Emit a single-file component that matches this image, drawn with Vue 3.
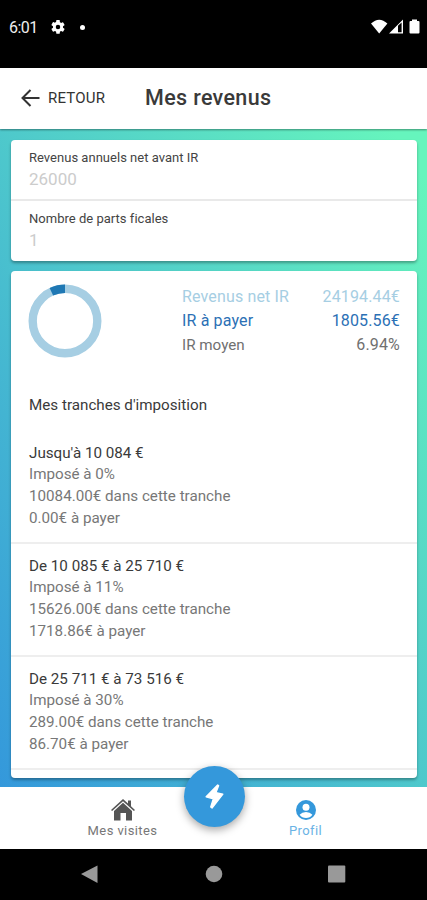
<script setup>
const fields = [
  { label: 'Revenus annuels net avant IR', value: '26000' },
  { label: 'Nombre de parts ficales', value: '1' },
]
const totals = [
  { label: 'Revenus net IR', value: '24194.44€', cls: 'light' },
  { label: 'IR à payer', value: '1805.56€', cls: 'strong' },
  { label: 'IR moyen', value: '6.94%', cls: 'plain' },
]
const brackets = [
  { title: "Jusqu'à 10 084 €", rate: 'Imposé à 0%', amount: '10084.00€ dans cette tranche', due: '0.00€ à payer' },
  { title: 'De 10 085 € à 25 710 €', rate: 'Imposé à 11%', amount: '15626.00€ dans cette tranche', due: '1718.86€ à payer' },
  { title: 'De 25 711 € à 73 516 €', rate: 'Imposé à 30%', amount: '289.00€ dans cette tranche', due: '86.70€ à payer' },
]
</script>

<template>
  <div class="screen">
    <div class="status">
      <span class="clock">6:01</span>
      <svg class="gear" viewBox="2 2 20 20"><path fill="#fff" fill-rule="evenodd" d="M19.14 12.94c.04-.3.06-.61.06-.94s-.02-.64-.07-.94l2.03-1.58a.49.49 0 0 0 .12-.61l-1.92-3.32a.49.49 0 0 0-.59-.22l-2.39.96a7 7 0 0 0-1.62-.94l-.36-2.54A.48.48 0 0 0 13.92 2h-3.84a.48.48 0 0 0-.47.41l-.36 2.54c-.59.24-1.13.57-1.62.94l-2.39-.96a.48.48 0 0 0-.59.22L2.74 8.87a.48.48 0 0 0 .12.61l2.03 1.58a7 7 0 0 0 0 1.88l-2.03 1.58a.49.49 0 0 0-.12.61l1.92 3.32c.12.22.37.29.59.22l2.39-.96c.5.38 1.03.7 1.62.94l.36 2.54c.05.24.24.41.48.41h3.84c.24 0 .44-.17.47-.41l.36-2.54a7 7 0 0 0 1.62-.94l2.39.96c.22.08.47 0 .59-.22l1.92-3.32a.48.48 0 0 0-.12-.61zM12 15.2a3.2 3.2 0 1 1 0-6.4 3.2 3.2 0 0 1 0 6.4z"/></svg>
      <span class="dot"></span>
      <svg class="signals" viewBox="0 0 50 16">
        <path fill="#fff" d="M0 4.500Q8.200-3.200 16.400 4.500L8.200 14.500Z"/>
        <path fill="#fff" fill-rule="evenodd" d="M18 14.500L32 .500V14.500ZM27 6.800V13.200H30.600V3.500Z"/>
        <path fill="#fff" d="M39.500 2h1.500V.500h5V2h1.500q1 0 1 1v10.500q0 1-1 1h-8q-1 0-1-1V3q0-1 1-1Z"/>
      </svg>
    </div>

    <header class="header">
      <svg class="arrow" viewBox="0 0 18 18"><path d="M18 9H1M9 1L1 9l8 8" fill="none" stroke="#333" stroke-width="2"/></svg>
      <span class="back">RETOUR</span>
      <h1>Mes revenus</h1>
    </header>

    <main class="content">
      <section class="card form">
        <div v-for="f in fields" :key="f.label" class="field">
          <div class="label">{{ f.label }}</div>
          <div class="value">{{ f.value }}</div>
        </div>
      </section>

      <section class="card results">
        <div class="summary">
          <svg class="ring" viewBox="0 0 74 74">
            <circle cx="37" cy="37" r="32.300" fill="none" stroke="#a6cee3" stroke-width="8.400"/>
            <circle cx="37" cy="37" r="32.300" fill="none" stroke="#1f78b4" stroke-width="8.400" pathLength="100" stroke-dasharray="6.94 93.06" stroke-dashoffset="-93.06" transform="rotate(-90 37 37)"/>
          </svg>
          <div class="totals">
            <div v-for="t in totals" :key="t.label" class="total" :class="t.cls">
              <span>{{ t.label }}</span><span>{{ t.value }}</span>
            </div>
          </div>
        </div>
        <h2>Mes tranches d'imposition</h2>
        <div v-for="b in brackets" :key="b.title" class="bracket">
          <h3>{{ b.title }}</h3>
          <p>{{ b.rate }}</p>
          <p>{{ b.amount }}</p>
          <p>{{ b.due }}</p>
        </div>
      </section>
    </main>

    <nav class="tabs">
      <div class="tab visits">
        <svg class="home" viewBox="0 0 24 22"><path fill="#555" d="M12 0l5 4.500V1.500h3v5.700l4 3.700-1.100 1.200L12 2.300 1.100 12.100 0 10.900Z"/><path fill="#555" d="M12 3.800l9 8.100V21.500h-6v-7.500H9.500v7.500H3v-9.600Z"/></svg>
        <span>Mes visites</span>
      </div>
      <div class="tab profile">
        <svg class="person" viewBox="0 0 20 20"><circle cx="10" cy="10" r="10" fill="#3498db"/><circle cx="10" cy="7.200" r="3.500" fill="#fff"/><path fill="#fff" d="M3.600 14.800Q6 12 10 12t6.400 2.800Q14 18 10 18T3.600 14.800Z"/></svg>
        <span>Profil</span>
      </div>
      <div class="fab">
        <svg class="bolt" viewBox="0 0 57 76"><path fill="#fff" stroke="#fff" stroke-width="4" stroke-linejoin="round" d="M38 3L3 39 25 45 17 70 21 73 54 31 33 26 41 5Z"/></svg>
      </div>
    </nav>

    <div class="system">
      <svg viewBox="0 0 427 51"><path fill="#999" d="M81 25L97.500 16.500V34Z"/><circle cx="214" cy="25" r="8.300" fill="#999"/><rect x="328" y="16.500" width="17.300" height="17" rx="1" fill="#999"/></svg>
    </div>
  </div>
</template>

<style>
body { margin: 0; overflow: hidden; }
</style>

<style scoped>
.screen { width: 427px; height: 900px; display: flex; flex-direction: column; overflow: hidden; font-family: Roboto, sans-serif; background: #000; }
.status { height: 68px; flex: none; box-sizing: border-box; padding: 19px 6px 0 9px; display: flex; align-items: flex-start; background: #000; color: #eee; }
.clock { width: 42px; font-size: 16px; line-height: 18px; letter-spacing: -0.5px; }
.gear { width: 14px; height: 14px; margin-top: 1px; }
.dot { width: 5px; height: 5px; border-radius: 50%; background: #fff; margin: 6px 0 0 15px; }
.signals { width: 50px; height: 16px; margin-left: auto; }
.header { height: 61px; flex: none; display: flex; align-items: center; padding: 0 0 2px 21px; box-sizing: border-box; background: #fff; position: relative; box-shadow: 0 1px 2px rgba(0,0,0,.4); color: #333; }
.arrow { width: 19px; height: 18px; }
.back { width: 97px; margin-left: 8px; font-size: 15px; letter-spacing: .2px; }
h1, h2, h3, p { margin: 0; font-weight: 400; }
h1 { font-size: 21.5px; font-weight: 500; letter-spacing: .35px; color: #3a3a3a; }
.content { height: 658px; flex: none; box-sizing: border-box; padding: 11px 10px 9px 11px; display: flex; flex-direction: column; gap: 10px; background: linear-gradient(57deg, #3498db, #66f5bd 96%); }
.card { background: #fff; border-radius: 4px; box-shadow: 0 2px 3px rgba(0,0,0,.32); overflow: hidden; }
.form { height: 121px; flex: none; }
.field { height: 59px; box-sizing: border-box; padding: 8px 18px 0; }
.field + .field { border-top: 2px solid #e9e9e9; height: 62px; }
.label { font-size: 13px; line-height: 19px; letter-spacing: .02px; color: #444; }
.value { font-size: 17px; line-height: 24px; color: #ccc; }
.results { flex: 1; min-height: 0; }
.summary { display: flex; padding: 13px 17px 0; height: 121px; box-sizing: border-box; }
.ring { width: 74px; height: 74px; }
.totals { margin-left: auto; width: 218px; padding-top: 1px; }
.total { display: flex; justify-content: space-between; font-size: 16px; line-height: 24px; letter-spacing: .15px; color: #707070; }
.total.light { color: #a6cee3; }
.total.strong { color: #2b70b5; }
.total.plain span:first-child { font-size: 15.2px; letter-spacing: 0; }
h2 { padding-left: 18px; height: 50px; font-size: 15.2px; line-height: 26px; color: #3a3a3a; }
.bracket { height: 102px; box-sizing: border-box; padding-left: 18px; border-bottom: 2px solid #eee; font-size: 15.2px; line-height: 21.8px; color: #777; }
.bracket + .bracket { height: 113px; padding-top: 11px; }
h3 { font-size: 15.2px; line-height: 22px; color: #3a3a3a; }
.tabs { height: 62px; flex: none; background: #fff; position: relative; display: flex; padding-left: 62px; gap: 62px; box-sizing: border-box; }
.tab { width: 121px; padding-top: 12px; display: flex; flex-direction: column; align-items: center; font-size: 13px; line-height: 15px; letter-spacing: .4px; }
.visits { color: #777; }
.profile { color: #6ab3e5; }
.home { width: 24px; height: 22px; margin-bottom: 2px; }
.person { width: 20px; height: 20px; margin: 1px 0 3px; }
.fab { position: absolute; left: 184px; top: -21px; width: 61px; height: 61px; border-radius: 50%; background: #3498db; display: flex; align-items: center; justify-content: center; box-shadow: 0 3px 8px rgba(0,0,0,.35); }
.bolt { width: 19px; height: 25px; }
.system { flex: 1; }
.system svg { width: 427px; height: 51px; display: block; }
</style>
